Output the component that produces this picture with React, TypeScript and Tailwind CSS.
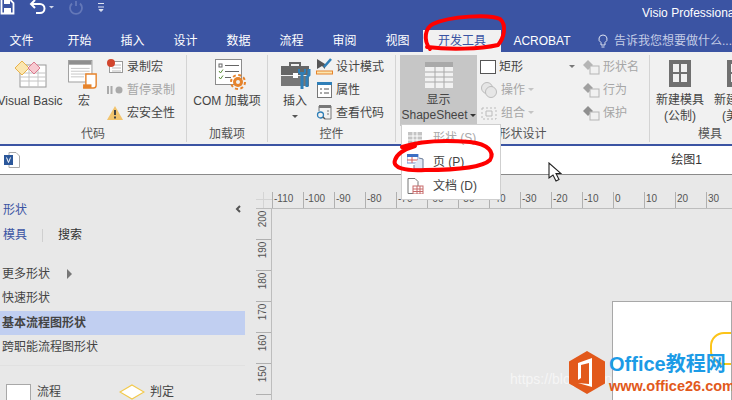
import type { ReactNode } from 'react';

const rulerTop = [-110, -100, -90, -80, -70, -60, -50, -40, -30, -20, -10, 0, 10, 20, 30, 40];
const rulerLeft = [200, 190, 180, 170, 160, 150];

const Caret = ({ color = '#777' }: { color?: string }) => (
  <svg width="6" height="3" viewBox="0 0 6 3" className="shrink-0">
    <path d="M0 0h6L3 3z" fill={color} />
  </svg>
);

const SmallRow = ({ icon, label, muted, caret }: { icon: ReactNode; label: string; muted?: boolean; caret?: boolean }) => (
  <div className={`flex h-[23px] items-center gap-[3px] whitespace-nowrap ${muted ? 'text-[#a6a6a6]' : 'text-[#444]'}`}>
    <span className="flex h-[18px] w-[18px] shrink-0 items-center justify-center">{icon}</span>
    {label}
    {caret && <Caret color="#c4c4c4" />}
  </div>
);

const Group = ({ width, label, children }: { width: string; label: string; children: ReactNode }) => (
  <div className={`${width} flex h-full shrink-0 flex-col border-r border-[#d4d4d4]`}>
    <div className="flex h-[73px]">{children}</div>
    <div className="text-center text-[12px] leading-[16px] text-[#555]">{label}</div>
  </div>
);

const VbaIcon = () => (
  <svg width="32" height="28" viewBox="0 0 32 28">
    <rect x="5" y="5" width="26" height="22" fill="#fff" stroke="#999" />
    <path d="M5 13h26M5 17h26M5 21h26M14 9v18M23 9v18" stroke="#c4c4c4" />
    <path d="M7 1l7 7-7 7-7-7z" fill="#fbe6b0" stroke="#e8b24a" />
    <path d="M19 2l6 6-6 6-6-6z" fill="#f7c9d0" stroke="#d9788c" />
  </svg>
);

const MacroIcon = () => (
  <svg width="32" height="29" viewBox="0 0 34 31">
    <rect x="0.5" y="0.5" width="25" height="23" fill="#fff" stroke="#999" />
    <rect x="1" y="1" width="24" height="4" fill="#8f8f8f" />
    <path d="M3 9h20M3 12h20M3 15h20M3 18h14" stroke="#c4c4c4" />
    <path d="M19 15h11v12c0 2-1 3-3 3H16c2 0 3-1 3-3z" fill="#fff" stroke="#e6832b" strokeWidth="1.5" />
    <rect x="16" y="26" width="9" height="4" fill="#e6832b" />
  </svg>
);

const ComIcon = () => (
  <svg width="32" height="32" viewBox="0 0 32 32">
    <rect x="0.5" y="0.5" width="26" height="25" fill="#fff" stroke="#8c8c8c" />
    <rect x="4" y="5" width="3" height="3" fill="none" stroke="#666" />
    <path d="M10 6.5h14M10 12.5h14M10 18.5h6" stroke="#666" />
    <path d="M4 12l1.5 2 2.5-3.5M4 18l1.5 2 2.5-3.5" fill="none" stroke="#5b8f3a" />
    <circle cx="23" cy="23" r="5" fill="#e6832b" />
    <circle cx="23" cy="23" r="7" fill="none" stroke="#e6832b" strokeWidth="2" strokeDasharray="3 2.5" />
    <circle cx="23" cy="23" r="2" fill="#f1f1f1" />
  </svg>
);

const ToolboxIcon = () => (
  <svg width="31" height="30" viewBox="0 0 31 30">
    <path d="M9 5V2h10v3" fill="none" stroke="#666" strokeWidth="2" />
    <rect x="0" y="5" width="28" height="9" fill="#666" />
    <rect x="0" y="15" width="28" height="10" fill="#777" />
    <rect x="12" y="12" width="5" height="5" fill="#fff" />
    <path d="M21 11v17M28 8v6l-2 2v10" fill="none" stroke="#2f7fb8" strokeWidth="3" />
    <path d="M18 8v3c0 2 6 2 6 0V8" fill="none" stroke="#2f7fb8" strokeWidth="2" />
  </svg>
);

const Diamond = ({ fill = '#b5b5b5' }: { fill?: string }) => (
  <svg width="18" height="16" viewBox="0 0 18 16">
    <path d="M6 1l5 5-5 5-5-5z" fill={fill} />
    <rect x="8" y="7" width="9" height="8" fill="#f1f1f1" stroke="#b5b5b5" />
  </svg>
);

const OfficeMark = () => (
  <svg width="36" height="43" viewBox="0 0 36 43">
    <path d="M18 0l18 10.5v22L18 43 0 32.5v-22z" fill="#e2591b" />
    <path d="M9 12l14-5v29l-14-4 11 1V12l-8 2v13l-3 2z" fill="#fff" />
  </svg>
);

export default function App() {
  return (
    <div className="relative flex h-[400px] w-[732px] flex-col overflow-hidden bg-[#e8e8e8] font-['Liberation_Sans','Noto_Sans_CJK_SC',sans-serif] text-[12px] text-[#444]">
      {/* Title bar */}
      <div className="flex h-[30px] shrink-0 bg-[#3b54a3] text-white">
        <svg width="18" height="15" viewBox="0 0 18 15">
          <path d="M1.5 0v13.5h12V3l-3-3" fill="none" stroke="#fff" strokeWidth="1.8" />
          <rect x="4" y="0" width="6" height="4" fill="#fff" />
          <rect x="4" y="8" width="7" height="5" fill="#fff" />
        </svg>
        <svg width="32" height="16" viewBox="0 0 32 16" className="ml-[11px]">
          <path d="M3 4h8a4 4 0 0 1 0 9H7M6 0L2 4l4 4" fill="none" stroke="#fff" strokeWidth="2" />
          <path d="M20 6h5l-2.5 2.5z" fill="#cfd6ea" />
        </svg>
        <svg width="16" height="16" viewBox="0 0 16 16" className="ml-[7px]">
          <path d="M8 1v5M4 3.5a6 6 0 1 0 8 0" fill="none" stroke="#6478b8" strokeWidth="1.8" />
        </svg>
        <svg width="8" height="14" viewBox="0 0 8 14" className="ml-[13px]">
          <path d="M1 3.5h6M1 7h6M2 9.5h4l-2 2z" stroke="#dfe4f2" fill="#dfe4f2" />
        </svg>
        <span className="ml-auto mt-[4px] w-[90px] shrink-0 overflow-hidden text-[12px] leading-[18px] whitespace-nowrap">Visio Professional</span>
      </div>

      {/* Tabs */}
      <div className="flex h-[22px] shrink-0 items-stretch bg-[#3b54a3] text-[12px] leading-[22px] text-white">
        <span className="mr-[10px] w-[44px] text-center">文件</span>
        {['开始', '插入', '设计', '数据', '流程', '审阅', '视图'].map((t, i) => (
          <span key={i} className="w-[53px] shrink-0 text-center">{t}</span>
        ))}
        <span className="ml-[-1px] w-[78px] shrink-0 bg-[#f1f1f1] text-center text-[#3b54a3]">开发工具</span>
        <span className="w-[82px] shrink-0 text-center">ACROBAT</span>
        <div className="ml-[15px] flex shrink-0 items-center gap-[6px] whitespace-nowrap text-[#c4cce6]">
          <svg width="10" height="15" viewBox="0 0 10 15">
            <path d="M5 1a4 4 0 0 1 2 7.5V11H3V8.5A4 4 0 0 1 5 1zM3.5 13h3" fill="none" stroke="#dfe4f2" />
          </svg>
          告诉我您想要做什么...
        </div>
      </div>

      {/* Ribbon */}
      <div className="flex h-[94px] shrink-0 border-b-2 border-[#3b54a3] bg-[#f1f1f1] pt-[3px] pb-[2px] text-[12px] leading-[16px]">
        <Group width="w-[187px]" label="代码">
          <div className="flex w-[60px] flex-col items-center whitespace-nowrap">
            <div className="mt-[5px] mb-[5px] ml-[1px]"><VbaIcon /></div>
            Visual Basic
          </div>
          <div className="ml-[8px] flex w-[32px] flex-col items-center">
            <div className="mt-[5px] mb-[4px]"><MacroIcon /></div>
            宏
          </div>
          <div className="ml-[6px] flex flex-col">
            <SmallRow label="录制宏" icon={
              <svg width="16" height="15" viewBox="0 0 16 15">
                <rect x="2.5" y="2.5" width="13" height="11" fill="#fff" stroke="#999" />
                <path d="M5 6h9M5 9h9M5 12h9" stroke="#bbb" />
                <circle cx="4" cy="4" r="4" fill="#d2452d" />
              </svg>
            } />
            <SmallRow muted label="暂停录制" icon={
              <svg width="16" height="10" viewBox="0 0 16 10">
                <path d="M1 1v8M4.5 1v8" stroke="#aaa" strokeWidth="2" />
                <circle cx="12" cy="5" r="3.5" fill="#aaa" />
              </svg>
            } />
            <SmallRow label="宏安全性" icon={
              <svg width="16" height="14" viewBox="0 0 16 14">
                <path d="M8 0l8 14H0z" fill="#f2c46d" />
                <path d="M8 4v5M8 10.5v2" stroke="#444" strokeWidth="2" />
              </svg>
            } />
          </div>
        </Group>
        <Group width="w-[81px]" label="加载项">
          <div className="flex w-full flex-col items-center whitespace-nowrap">
            <div className="mt-[4px] mb-[2px] ml-[8px]"><ComIcon /></div>
            COM 加载项
          </div>
        </Group>
        <Group width="w-[128px]" label="控件">
          <div className="ml-[11px] flex w-[32px] flex-col items-center">
            <div className="mt-[6px] mb-[2px] ml-[2px]"><ToolboxIcon /></div>
            插入
            <span className="mt-[6px]"><Caret color="#555" /></span>
          </div>
          <div className="ml-[4px] flex flex-col">
            <SmallRow label="设计模式" icon={
              <svg width="17" height="17" viewBox="0 0 17 17">
                <path d="M1 1v10l5-3 3 3V6z" fill="#555" />
                <path d="M8 9l7-8" stroke="#2f7fb8" strokeWidth="2.5" />
                <rect x="0.5" y="13" width="16" height="3" fill="#fbe6b0" stroke="#e6832b" />
              </svg>
            } />
            <SmallRow label="属性" icon={
              <svg width="15" height="16" viewBox="0 0 15 16">
                <rect x="0.5" y="0.5" width="14" height="15" fill="#fff" stroke="#777" />
                <rect x="0" y="0" width="15" height="3" fill="#2f7fb8" />
                <path d="M3 7h2M7 7h5M3 11h2M7 11h5" stroke="#555" />
              </svg>
            } />
            <SmallRow label="查看代码" icon={
              <svg width="16" height="15" viewBox="0 0 16 15">
                <path d="M3 6V1h12v13H9" fill="none" stroke="#777" />
                <rect x="3" y="0" width="12" height="3" fill="#777" />
                <path d="M11 6h2M11 9h2" stroke="#777" />
                <circle cx="4.5" cy="10" r="3" fill="none" stroke="#2f7fb8" strokeWidth="1.3" />
                <path d="M7 12l2 2" stroke="#555" strokeWidth="1.5" />
              </svg>
            } />
          </div>
        </Group>
        <Group width="w-[254px]" label="形状设计">
          <div className="ml-[4px] flex h-[71px] w-[77px] shrink-0 flex-col items-center bg-[#c6c6c6] leading-[15px]">
            <div className="mt-[7px] mb-[5px]">
              <svg width="28" height="26" viewBox="0 0 28 26">
                <rect width="28" height="26" fill="#f1f1f1" />
                <rect width="28" height="5" fill="#a9a9a9" />
                <path d="M0 10h28M0 15h28M0 20h28M10 5v21M19 5v21" stroke="#a9a9a9" />
              </svg>
            </div>
            显示
            <span className="flex items-center gap-[2px]">
              ShapeSheet
              <Caret color="#333" />
            </span>
          </div>
          <div className="ml-[3px] flex w-[95px] shrink-0 flex-col">
            <div className="flex h-[23px] items-center justify-between">
              <span className="flex items-center gap-[3px]">
                <span className="h-[14px] w-[16px] border border-[#555] bg-white" />
                矩形
              </span>
              <Caret />
            </div>
            <SmallRow muted caret label="操作" icon={
              <svg width="16" height="16" viewBox="0 0 16 16">
                <circle cx="6" cy="6" r="5.5" fill="#e6e6e6" stroke="#bbb" />
                <circle cx="10" cy="10" r="5.5" fill="#e6e6e6" stroke="#bbb" />
              </svg>
            } />
            <SmallRow muted caret label="组合" icon={
              <svg width="16" height="16" viewBox="0 0 16 16">
                <path d="M1 3h14v11H1z" fill="none" stroke="#bbb" strokeDasharray="2 2" />
                <path d="M5 6h6v5H5z" fill="none" stroke="#bbb" />
              </svg>
            } />
          </div>
          <div className="ml-[7px] flex shrink-0 flex-col text-[#a6a6a6]">
            <SmallRow muted label="形状名" icon={<Diamond />} />
            <SmallRow muted label="行为" icon={<Diamond fill="#a0a0a0" />} />
            <SmallRow muted label="保护" icon={<Diamond fill="#8f8f8f" />} />
          </div>
        </Group>
        <div className="flex h-full grow flex-col overflow-hidden">
          <div className="flex h-[73px] gap-[6px] pt-[5px] pl-[4px] leading-[16px]">
            {[
              ['新建模具', '(公制)'],
              ['新建模具', '(美制)'],
            ].map(([a, b], i) => (
              <div key={i} className="flex w-[52px] shrink-0 flex-col items-center whitespace-nowrap">
                <svg width="22" height="27" viewBox="0 0 22 27" className="mb-[5px]">
                  <rect width="22" height="27" fill="#707070" />
                  <rect x="4" y="4" width="6" height="8" fill="#f1f1f1" />
                  <rect x="12" y="4" width="6" height="8" fill="#f1f1f1" />
                  <rect x="4" y="14" width="6" height="8" fill="#f1f1f1" />
                  <rect x="12" y="14" width="6" height="8" fill="#f1f1f1" />
                </svg>
                {a}
                <span>{b}</span>
              </div>
            ))}
          </div>
          <div className="pl-[38px] text-center text-[12px] leading-[16px] text-[#555]">模具</div>
        </div>
      </div>

      {/* Document tab strip */}
      <div className="flex h-[29px] shrink-0 items-center border-b border-[#8a8a8a] bg-white pr-[30px]">
        <svg width="16" height="16" viewBox="0 0 16 16" className="ml-[4px]">
          <path d="M5 .5h7L15.5 4v11.5H5z" fill="#fff" stroke="#aaa" />
          <rect x="0" y="3" width="9" height="10" fill="#2b579a" />
          <path d="M2.5 5.5l2 5 2-5" fill="none" stroke="#fff" />
        </svg>
        <span className="ml-auto text-[#333]">绘图1</span>
      </div>

      {/* Body */}
      <div className="flex min-h-0 grow">
        <aside className="w-[256px] shrink-0 pt-[27px] leading-[17px]">
          <div className="flex w-[245px] items-center justify-between pr-[4px] pl-[3px] text-[#3b54a3]">
            形状
            <svg width="6" height="8" viewBox="0 0 6 8" className="mt-[-3px]">
              <path d="M5 1L2 4l3 3" fill="none" stroke="#555" strokeWidth="2" />
            </svg>
          </div>
          <div className="mt-[8px] flex items-center pl-[3px]">
            <span className="text-[#3b54a3]">模具</span>
            <span className="mx-[15px] h-[13px] w-px bg-[#cfcfcf]" />
            <span className="text-[#333]">搜索</span>
          </div>
          <div className="mt-[18px] flex h-[24px] items-center pl-[2px]">
            更多形状
            <span className="ml-[17px] h-0 w-0 border-y-[5px] border-l-[5px] border-y-transparent border-l-[#777]" />
          </div>
          <div className="flex h-[25px] items-center pl-[2px]">快速形状</div>
          <div className="flex h-[24px] w-[245px] items-center bg-[#c1cff1] pl-[2px] font-bold">基本流程图形状</div>
          <div className="flex h-[24px] items-center pl-[2px]">跨职能流程图形状</div>
          <div className="mt-[6px] h-px w-[245px] bg-[#e1e1e1]" />
          <div className="mt-[18px] flex items-start">
            <div className="ml-[6px] h-[24px] w-[25px] shrink-0 border border-[#a8a8a8] bg-white" />
            <span className="ml-[6px]">流程</span>
            <svg width="26" height="16" viewBox="0 0 26 16" className="ml-[58px] shrink-0">
              <path d="M13 1l12 7-12 7L1 8z" fill="#fff" stroke="#f2c94c" strokeWidth="1.2" />
            </svg>
            <span className="ml-[5px]">判定</span>
          </div>
        </aside>

        <main className="flex min-w-0 grow flex-col">
          <div className="mt-[17px] flex h-[17px] shrink-0 border-b border-[#bdbdbd]">
            <div className="relative w-[16px] shrink-0">
              <span className="absolute top-[7px] left-0 h-px w-[16px] bg-[#d4d4d4]" />
              <span className="absolute top-0 left-[7px] h-[16px] w-px bg-[#d4d4d4]" />
            </div>
            {rulerTop.map(v => (
              <span key={v} className="w-[31px] shrink-0 border-l border-[#b0b0b0] pl-px text-[10px] leading-[13px] text-[#555]">{v}</span>
            ))}
          </div>
          <div className="flex min-h-0 grow">
            <div className="w-[16px] shrink-0 border-r border-[#bdbdbd]">
              {rulerLeft.map(v => (
                <div key={v} className="flex h-[31px] items-start justify-center border-b border-[#b0b0b0]">
                  <span className="mt-[5px] rotate-[-90deg] text-[10px] leading-[10px] text-[#555]">{v}</span>
                </div>
              ))}
            </div>
            <div className="flex min-w-0 grow justify-end pt-[92px]">
              <div className="h-[120px] w-[120px] shrink-0 overflow-hidden border border-[#a8a8a8] bg-white pt-[30px] pl-[97px]">
                <div className="h-[33px] w-[60px] rounded-[14px] border-2 border-[#fcc419]" />
              </div>
            </div>
          </div>
        </main>
      </div>

      {/* ShapeSheet dropdown */}
      <div className="absolute top-[124px] left-[401px] z-10 w-[100px] border border-[#cfcfcf] bg-white py-[1px] text-[12px]">
        {[
          { label: '形状 (S)', muted: true },
          { label: '页 (P)' },
          { label: '文档 (D)' },
        ].map((item, i) => (
          <div key={i} className={`flex h-[24px] items-center ${item.muted ? 'text-[#aaa]' : 'text-[#444]'}`}>
            <span className="ml-[4px] flex w-[18px] justify-center">
              {i === 2 ? (
                <svg width="17" height="16" viewBox="0 0 17 16">
                  <path d="M1 .5h7l3 3v12H1z" fill="#fff" stroke="#777" />
                  <rect x="6" y="8" width="10" height="8" fill="#fff" stroke="#c76a6a" />
                  <path d="M6 11h10M6 13.5h10M10 8v8M13 8v8" stroke="#c76a6a" />
                </svg>
              ) : i === 1 ? (
                <svg width="17" height="16" viewBox="0 0 17 16">
                  <rect x="0" y="0" width="11" height="9" fill="#fff" stroke="#6d8fd0" />
                  <rect x="0" y="0" width="11" height="3" fill="#3b6fc4" />
                  <path d="M0 6h11M5 3v6" stroke="#d45a5a" />
                  <path d="M12 4l4 1v10H7v-4" fill="#dfe8f5" stroke="#6d7d99" />
                </svg>
              ) : (
                <svg width="14" height="12" viewBox="0 0 14 12"><rect width="14" height="12" fill="#c4c4c4" /><path d="M0 4h14M0 8h14M5 0v12M9 0v12" stroke="#fff" /></svg>
              )}
            </span>
            <span className="ml-[9px]">{item.label}</span>
          </div>
        ))}
      </div>

      {/* Red marker annotations */}
      <svg width="732" height="400" className="pointer-events-none absolute top-0 left-0 z-20" fill="none" stroke="#f00" strokeWidth="4" strokeLinecap="round">
        <path d="M430 49C423 40 425 28 433 24C450 16 490 14 500 19C507 25 504 38 498 45C480 49 450 50 427 47" />
        <path d="M402 147C420 141 445 140 470 142C488 144 495 152 490 160C482 168 455 170 425 170C405 171 392 168 395 160C397 154 405 149 415 146" />
      </svg>

      {/* Mouse cursor */}
      <svg width="14" height="20" viewBox="0 0 14 20" className="pointer-events-none absolute top-[162px] left-[548px] z-20">
        <path d="M1 1v15l4-3 3 6 3-1.5-3-6h5z" fill="#fff" stroke="#222" strokeWidth="1.1" />
      </svg>

      {/* Site watermark */}
      <div className="pointer-events-none absolute top-[351px] left-[569px] z-20 flex">
        <OfficeMark />
        <div className="ml-[4px] whitespace-nowrap font-bold">
          <div className="text-[20px] leading-[26px] text-[#1c9be6]">Office教程网</div>
          <div className="mt-[1px] text-[14.5px] leading-[16px] text-[#e2591b]">www.office26.com</div>
        </div>
      </div>
      <span className="pointer-events-none absolute top-[369px] left-[510px] z-10 text-[14px] text-[#ffffff99]">https://blog.csdn.net</span>
    </div>
  );
}
